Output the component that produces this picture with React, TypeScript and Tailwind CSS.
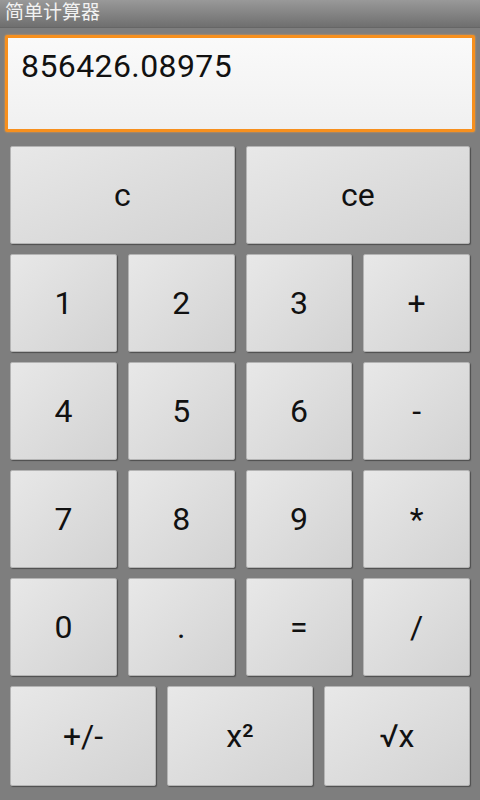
import React from "react";

const Btn = ({ label }: { label: React.ReactNode }) => (
  <div className="flex items-center justify-center rounded-[2px] border border-[#b4b4b4] bg-gradient-to-br from-[#e8e8e8] to-[#d2d2d2] text-[32px] leading-none text-[#111] shadow-[1px_1px_1px_rgba(40,40,40,0.55)]">
    {label}
  </div>
);

export default function App() {
  const font = { fontFamily: "Roboto, 'Noto Sans CJK SC', sans-serif" };
  return (
    <div className="flex h-[800px] w-[480px] flex-col overflow-hidden bg-[#7e7e7e]" style={font}>
      <div className="flex h-[28px] items-center bg-gradient-to-b from-[#999999] to-[#6f6f6f] pl-[5px] text-[19px] text-[#f2f2f2] border-b border-[#666]">
        简单计算器
      </div>
      <div className="mx-[5px] mt-[7px] h-[97px] rounded-[2px] border-[3px] border-[#f7901e] bg-gradient-to-b from-[#fafafa] to-[#f0f0f0] px-[13px] pt-[12px] text-[32px] leading-none tracking-[0.4px] text-[#111] shadow-[0_0_2px_#f7a040]">
        856426.08975
      </div>
      <div className="mt-[14px] flex flex-col gap-[10px] px-[10px]">
        <div className="grid h-[98px] grid-cols-2 gap-[11px]">
          <Btn label="c" />
          <Btn label="ce" />
        </div>
        {[
          ["1", "2", "3", "+"],
          ["4", "5", "6", "-"],
          ["7", "8", "9", "*"],
          ["0", ".", "=", "/"],
        ].map((row, i) => (
          <div key={i} className="grid h-[98px] grid-cols-4 gap-[11px]">
            {row.map((k) => (
              <Btn key={k} label={k} />
            ))}
          </div>
        ))}
        <div className="grid h-[100px] grid-cols-3 gap-[11px]">
          <Btn label="+/-" />
          <Btn label="x²" />
          <Btn label="√x" />
        </div>
      </div>
    </div>
  );
}
